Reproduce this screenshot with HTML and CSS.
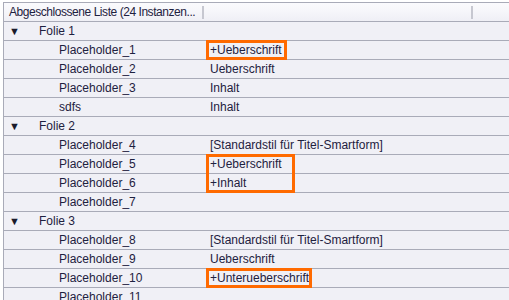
FILE: index.html
```html
<!DOCTYPE html>
<html lang="de">
<head>
  <meta charset="UTF-8" />
  <title>Abgeschlossene Liste</title>
  <link rel="stylesheet" href="styles.css">
</head>
<body>

  <div class="list">
    <div class="list-header">
      <div class="col-title">Abgeschlossene Liste (24 Instanzen...</div>
      <div class="grip"></div>
      <div class="col-rest"></div>
      <div class="grip"></div>
    </div>

    <div class="row group"><span class="arrow">&#9660;</span><span class="group-name">Folie 1</span></div>
    <div class="row"><div class="name">Placeholder_1</div><div class="value">+Ueberschrift</div></div>
    <div class="row"><div class="name">Placeholder_2</div><div class="value">Ueberschrift</div></div>
    <div class="row"><div class="name">Placeholder_3</div><div class="value">Inhalt</div></div>
    <div class="row"><div class="name">sdfs</div><div class="value">Inhalt</div></div>

    <div class="row group"><span class="arrow">&#9660;</span><span class="group-name">Folie 2</span></div>
    <div class="row"><div class="name">Placeholder_4</div><div class="value">[Standardstil für Titel-Smartform]</div></div>
    <div class="row"><div class="name">Placeholder_5</div><div class="value">+Ueberschrift</div></div>
    <div class="row"><div class="name">Placeholder_6</div><div class="value">+Inhalt</div></div>
    <div class="row"><div class="name">Placeholder_7</div><div class="value"></div></div>

    <div class="row group"><span class="arrow">&#9660;</span><span class="group-name">Folie 3</span></div>
    <div class="row"><div class="name">Placeholder_8</div><div class="value">[Standardstil für Titel-Smartform]</div></div>
    <div class="row"><div class="name">Placeholder_9</div><div class="value">Ueberschrift</div></div>
    <div class="row"><div class="name">Placeholder_10</div><div class="value">+Unterueberschrift</div></div>
    <div class="row"><div class="name">Placeholder_11</div><div class="value"></div></div>

    <!-- highlight markers -->
    <div class="mark mark-1"></div>
    <div class="mark mark-2"></div>
    <div class="mark mark-3"></div>
  </div>

</body>
</html>
```

FILE: styles.css
```css
* {
  box-sizing: border-box;
}

body {
  margin: 0;
  padding: 2px 0 0 3px;
  background: #fff;
  font-family: "Liberation Sans", Arial, sans-serif;
  font-size: 12px;
  color: #1e2140;
  overflow: hidden;
}

.list {
  position: relative;
  border-top: 1px solid #a9abb8;
  border-left: 1px solid #a9abb8;
  background: #f0f0f6;
}

.list-header {
  display: flex;
  align-items: center;
  height: 19px;
  border-bottom: 1px solid #a9abb8;
  background: linear-gradient(#fafafd 0%, #f6f6fa 45%, #efeff5 100%);
}

.col-title {
  width: 198px;
  padding-left: 5px;
  white-space: nowrap;
  letter-spacing: -0.45px;
}

.col-rest {
  width: 267px;
}

.grip {
  width: 2px;
  height: 13px;
  background: #c6c7d0;
}

.row {
  display: flex;
  align-items: center;
  height: 19px;
  border-bottom: 1px solid #a9abb8;
  white-space: nowrap;
}

.name {
  width: 202px;
  padding-left: 55px;
}

.value {
  padding-left: 4px;
}

.arrow {
  width: 35px;
  padding-left: 5px;
  font-size: 11px;
  color: #1a1a2a;
}

.mark {
  position: absolute;
  border: 3px solid #ff6a00;
}

.mark-1 {
  left: 202px;
  top: 37px;
  width: 81px;
  height: 20px;
}

.mark-2 {
  left: 202px;
  top: 151px;
  width: 89px;
  height: 39px;
}

.mark-3 {
  left: 202px;
  top: 265px;
  width: 106px;
  height: 20px;
}
```
